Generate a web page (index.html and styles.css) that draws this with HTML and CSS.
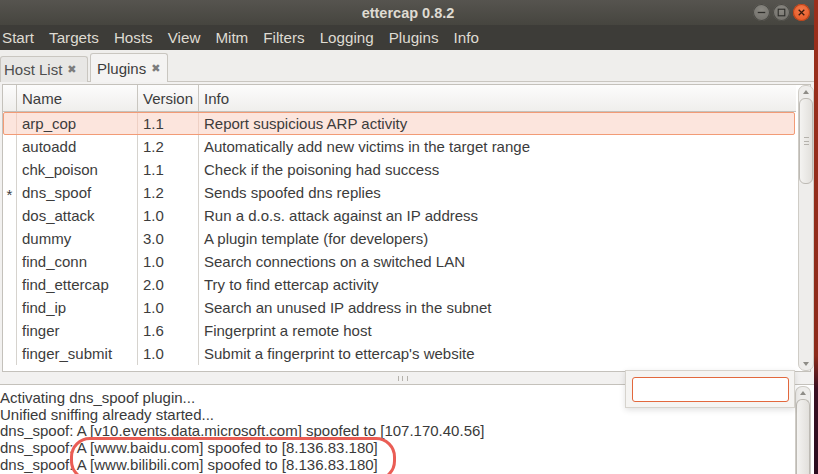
FILE: index.html
```html
<!DOCTYPE html>
<html>
<head>
<meta charset="utf-8">
<link rel="stylesheet" href="styles.css">
</head>
<body>
<div class="window">
  <div class="titlebar">
    <div></div>
    <div class="title">ettercap 0.8.2</div>
    <div class="wbtns">
      <span class="wb min"><svg width="16" height="16" viewBox="0 0 16 16"><line x1="4" y1="8" x2="12" y2="8" stroke="#2e2d2a" stroke-width="1.4"/></svg></span>
      <span class="wb max"><svg width="16" height="16" viewBox="0 0 16 16"><rect x="4.5" y="4.5" width="7" height="7" fill="none" stroke="#2e2d2a" stroke-width="1.2"/></svg></span>
      <span class="wb close"><svg width="16" height="16" viewBox="0 0 16 16"><path d="M5 5L11 11M11 5L5 11" stroke="#3a1a0c" stroke-width="1.4"/></svg></span>
    </div>
  </div>
  <div class="menubar">
    <span class="mi">Start</span><span class="mi">Targets</span><span class="mi">Hosts</span><span class="mi">View</span><span class="mi">Mitm</span><span class="mi">Filters</span><span class="mi">Logging</span><span class="mi">Plugins</span><span class="mi">Info</span>
  </div>
  <div class="tabs">
    <div class="tab inactive">Host List <span class="tx">✖</span></div>
    <div class="tab active">Plugins <span class="tx">✖</span></div>
  </div>
  <div class="content">
    <div class="upper">
      <div class="tree">
        <div class="row head"><div class="c0"></div><div class="c1">Name</div><div class="c2">Version</div><div class="c3">Info</div></div>
        <div class="row sel"><div class="c0"></div><div class="c1">arp_cop</div><div class="c2">1.1</div><div class="c3">Report suspicious ARP activity</div></div>
        <div class="row"><div class="c0"></div><div class="c1">autoadd</div><div class="c2">1.2</div><div class="c3">Automatically add new victims in the target range</div></div>
        <div class="row"><div class="c0"></div><div class="c1">chk_poison</div><div class="c2">1.1</div><div class="c3">Check if the poisoning had success</div></div>
        <div class="row"><div class="c0">*</div><div class="c1">dns_spoof</div><div class="c2">1.2</div><div class="c3">Sends spoofed dns replies</div></div>
        <div class="row"><div class="c0"></div><div class="c1">dos_attack</div><div class="c2">1.0</div><div class="c3">Run a d.o.s. attack against an IP address</div></div>
        <div class="row"><div class="c0"></div><div class="c1">dummy</div><div class="c2">3.0</div><div class="c3">A plugin template (for developers)</div></div>
        <div class="row"><div class="c0"></div><div class="c1">find_conn</div><div class="c2">1.0</div><div class="c3">Search connections on a switched LAN</div></div>
        <div class="row"><div class="c0"></div><div class="c1">find_ettercap</div><div class="c2">2.0</div><div class="c3">Try to find ettercap activity</div></div>
        <div class="row"><div class="c0"></div><div class="c1">find_ip</div><div class="c2">1.0</div><div class="c3">Search an unused IP address in the subnet</div></div>
        <div class="row"><div class="c0"></div><div class="c1">finger</div><div class="c2">1.6</div><div class="c3">Fingerprint a remote host</div></div>
        <div class="row"><div class="c0"></div><div class="c1">finger_submit</div><div class="c2">1.0</div><div class="c3">Submit a fingerprint to ettercap's website</div></div>
      </div>
      <div class="vscroll">
        <div class="arrow up"></div>
        <div class="thumb"><span class="grip"></span></div>
        <div class="track"></div>
        <div class="arrow down"></div>
      </div>
    </div>
    <div class="pane-sep"><span class="pgrip"></span></div>
    <div class="lower">
      <div class="log">
        <div>Activating dns_spoof plugin...</div>
        <div>Unified sniffing already started...</div>
        <div>dns_spoof: A [v10.events.data.microsoft.com] spoofed to [107.170.40.56]</div>
        <div>dns_spoof: A [www.baidu.com] spoofed to [8.136.83.180]</div>
        <div>dns_spoof: A [www.bilibili.com] spoofed to [8.136.83.180]</div>
      </div>
      <div class="vscroll small">
        <div class="arrow up"></div>
        <div class="thumb long"></div>
      </div>
    </div>
    <div class="popup"><div class="entry"></div></div>
    <div class="mark"></div>
  </div>
</div>
<div class="desktop"></div>
</body>
</html>
```
FILE: styles.css
```css
html, body { margin: 0; padding: 0; }
body {
  width: 818px; height: 474px; overflow: hidden;
  display: flex;
  font-family: "Liberation Sans", "DejaVu Sans", sans-serif;
  font-size: 15px;
  color: #3c3c3c;
}
.window { width: 814px; height: 474px; display: flex; flex-direction: column; background: #f2f1f0; }
.desktop { width: 4px; height: 474px; background: linear-gradient(#9b2f1c 0%, #8c2a1a 75%, #3a1022 82%, #2a0c1e 100%); }

.titlebar {
  height: 25px; flex: none;
  display: grid; grid-template-columns: 1fr auto 1fr; align-items: center;
  background: linear-gradient(#56544f, #46453f);
}
.title { color: #dfdbd2; font-weight: bold; font-size: 14.5px; padding-left: 2px; }
.wbtns { display: flex; justify-content: flex-end; gap: 3px; padding-right: 4px; }
.wb { width: 17px; height: 17px; border-radius: 50%; display: flex; align-items: center; justify-content: center; }
.wb svg { width: 15px; height: 15px; }
.min, .max { background: radial-gradient(circle at 50% 35%, #8b8983, #6b6964); box-shadow: inset 0 0 0 1px #4a4944; }
.close { background: radial-gradient(circle at 50% 35%, #f47a4a, #e2521f); box-shadow: inset 0 0 0 1px #b8431a; }

.menubar {
  height: 25px; flex: none;
  display: flex; align-items: center;
  background: #3d3c38;
  color: #dfdbd2; font-size: 15.2px;
  padding-left: 2px;
}
.mi { margin-right: 15px; }

.tabs { height: 32px; flex: none; display: flex; align-items: flex-end; background: #efeeec; border-bottom: 1px solid #c9c6c0; box-sizing: border-box; }
.tab { height: 27px; display: flex; align-items: center; box-sizing: border-box; padding: 0 6px 0 3px; border: 1px solid #c9c6c0; border-bottom: none; border-radius: 3px 3px 0 0; margin-bottom: -1px; white-space: nowrap; }
.tab.inactive { width: 88px; background: #e8e7e5; color: #4e4e4e; height: 26px; }
.tab.active { width: 78px; margin-left: 2px; height: 29px; background: #f4f3f2; padding-left: 6px; }
.tx { font-size: 11px; color: #7c7c7c; margin-left: 5px; }

.content { position: relative; flex: 1; display: flex; flex-direction: column; padding-top: 2px; }
.upper { height: 288px; flex: none; display: flex; margin: 0 3px 0 2px; border: 1px solid #c4c1bb; background: #fff; box-sizing: border-box; }
.tree { width: 793px; flex: none; overflow: hidden; }
.row { display: flex; height: 23px; align-items: center; box-sizing: border-box; }
.row > div { height: 100%; display: flex; align-items: center; box-sizing: border-box; white-space: nowrap; }
.c0 { width: 14px; border-right: 1px solid #d6d3ce; justify-content: center; padding-top: 3px; }
.c1 { width: 121px; border-right: 1px solid #d6d3ce; padding-left: 5px; }
.c2 { width: 61px; border-right: 1px solid #d6d3ce; padding-left: 5px; }
.c3 { flex: 1; padding-left: 5px; }
.row.head { height: 27px; background: linear-gradient(#fcfcfc, #efeeec); border-bottom: 1px solid #c4c1bb; }
.row.head > div { border-right-color: #c9c6c0; }
.row.sel { background: #fce5dd; border: 1px solid #f29b76; border-radius: 2px; margin: 0 1px 0 0; }
.row.sel > div { border-right-color: #eed0c4; }
.row.sel .c0 { width: 13px; }

.vscroll { width: 14px; flex: none; margin: 0 1px 0 2px; display: flex; flex-direction: column; background: #f2f1f0; }
.upper .vscroll { border: 1px solid #cfccc6; border-radius: 7px; margin-top: 0; background: #eeedeb; }
.arrow { height: 12px; flex: none; position: relative; }
.arrow.up::after { content: ""; position: absolute; left: 4px; top: 4px; border-left: 3px solid transparent; border-right: 3px solid transparent; border-bottom: 4px solid #8e8c87; }
.arrow.down::after { content: ""; position: absolute; left: 4px; top: 4px; border-left: 3px solid transparent; border-right: 3px solid transparent; border-top: 4px solid #8e8c87; }
.thumb { height: 86px; flex: none; border: 1px solid #bdbab4; border-radius: 6px; background: linear-gradient(90deg, #f4f3f1, #e2e0dc); display: flex; align-items: center; justify-content: center; box-sizing: border-box; margin: 0 0; }
.grip { width: 5px; height: 6px; border-top: 1px solid #b5b2ac; border-bottom: 1px solid #b5b2ac; position: relative; }
.grip::after { content: ""; position: absolute; left: 0; right: 0; top: 2.5px; border-top: 1px solid #b5b2ac; }
.track { flex: 1; }

.pane-sep { height: 12px; flex: none; display: flex; align-items: center; justify-content: center; }
.pgrip { width: 8px; height: 5px; border-left: 1px solid #b5b2ac; border-right: 1px solid #b5b2ac; position: relative; margin-right: 8px; }
.pgrip::after { content: ""; position: absolute; top: 0; bottom: 0; left: 2.5px; border-left: 1px solid #b5b2ac; }

.lower { flex: 1; display: flex; background: #fff; border-top: 1px solid #c4c1bb; }
.log { flex: 1; padding-top: 5px; line-height: 16.7px; color: #3a3a3a; white-space: nowrap; overflow: hidden; }
.lower .vscroll { margin: 1px 3px 0 1px; border: 1px solid #cfccc6; border-bottom: none; border-radius: 7px 7px 0 0; background: #eeedeb; }
.thumb.long { flex: 1; border-bottom: none; border-radius: 6px 6px 0 0; }

.popup { position: absolute; left: 625px; top: 288px; width: 170px; height: 38px; background: #f5f4f2; border: 1px solid #d6d3cd; box-sizing: border-box; box-shadow: 0 2px 6px rgba(0,0,0,0.12); display: flex; align-items: center; justify-content: center; }
.entry { width: 157px; height: 25px; box-sizing: border-box; border: 1.5px solid #e2683d; border-radius: 3px; background: #fff; }
.mark { position: absolute; left: 70px; top: 355px; width: 326px; height: 44px; box-sizing: border-box; border: 3px solid #ea5d55; border-radius: 20px; }
```
